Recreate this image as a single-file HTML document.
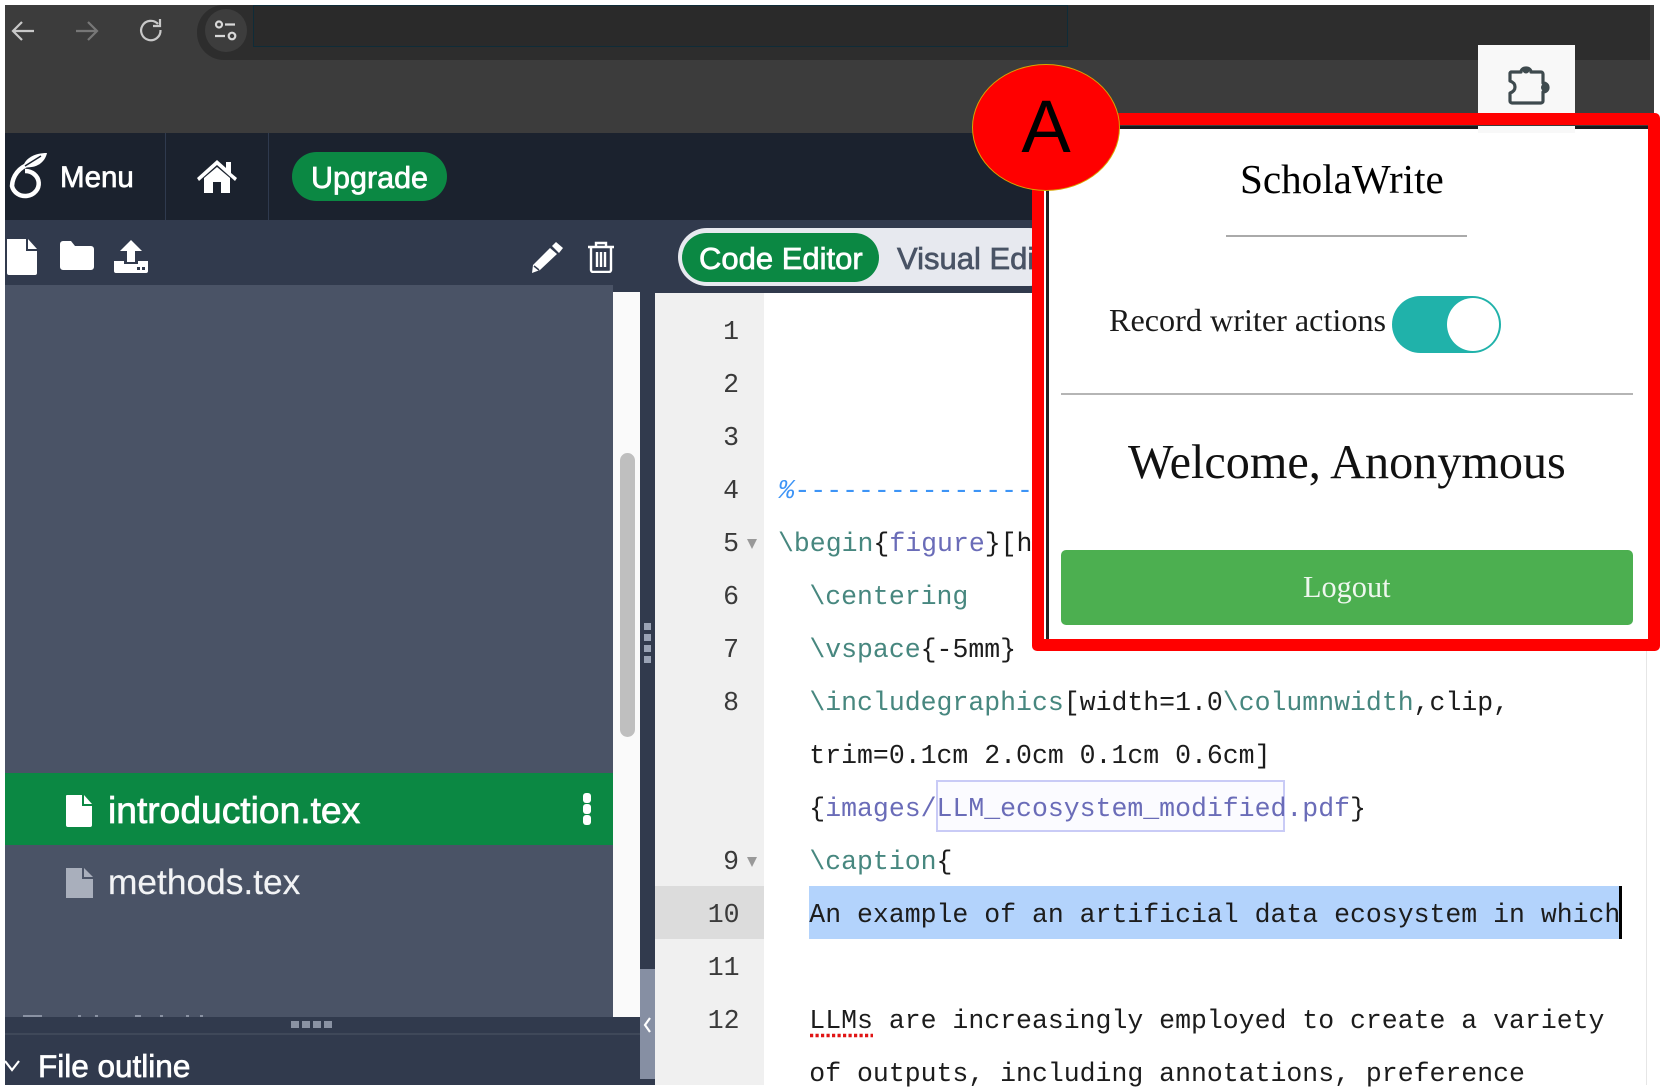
<!DOCTYPE html>
<html lang="en"><head><meta charset="utf-8"><title>ScholaWrite</title>
<style>
html,body{margin:0;padding:0;background:#fff;width:1661px;height:1091px;overflow:hidden}
#r{position:relative;width:1661px;height:1091px;overflow:hidden;font-family:"Liberation Sans",sans-serif;filter:blur(.35px)}
#r div,#r svg,#r span.a{position:absolute}
.t{white-space:pre;-webkit-text-stroke:.7px currentColor}
.ln{left:656.500px;width:83px;height:53px;line-height:53px;text-align:right;font:26.5px/53px "Liberation Mono",monospace;color:#3a3a3a}
.c{left:777.500px;height:53px;white-space:pre;font:26.5px/53px "Liberation Mono",monospace;color:#1c1c1c}
.g{color:#47877f}.p{color:#6a6cb8}
.s{font-family:"Liberation Serif",serif;white-space:pre;color:#111}
.tri{width:0;height:0;border-left:5px solid transparent;border-right:5px solid transparent;border-top:10px solid #999;left:747px}
</style></head><body><div id="r">

<!-- browser chrome -->
<div style="left:5px;top:5px;width:1649px;height:128px;background:#3c3c3c"></div>
<div style="left:197px;top:5px;width:1453px;height:55px;background:#2d2d2d;border-radius:27px 0 0 27px"></div>
<div style="left:205px;top:9px;width:42px;height:43px;border-radius:50%;background:#3d3d3d"></div>
<div style="left:253px;top:5px;width:815px;height:42px;background:#2a2a2a;border:1px solid #0f2c38;box-sizing:border-box"></div>
<svg style="left:10px;top:15px" width="170" height="32" viewBox="0 0 170 32" fill="none" stroke-width="2.2">
<path d="M24 16H4M12 7l-9 9 9 9" stroke="#c8c8c8"/><path d="M66 16h20M78 7l9 9-9 9" stroke="#777"/>
<path d="M148 9a9.700 9.700 0 1 0 2.500 6" stroke="#c8c8c8"/><path d="M150 4v7h-7" stroke="#c8c8c8" fill="none"/></svg>
<svg style="left:214px;top:19px" width="24" height="24" viewBox="0 0 24 24" fill="none" stroke="#d8d8d8" stroke-width="2.2"><circle cx="5" cy="5.500" r="3"/><path d="M11 5.500h10M1 17h10"/><circle cx="18" cy="17" r="3.300"/></svg>

<!-- nav -->
<div style="left:5px;top:133px;width:1645px;height:87px;background:#1b222e"></div>
<div style="left:165px;top:133px;width:1px;height:87px;background:#2f3a4e"></div>
<div style="left:268px;top:133px;width:1px;height:87px;background:#2f3a4e"></div>
<svg style="left:8px;top:150px" width="42" height="50" viewBox="0 0 42 50"><path d="M22 14C11 17 4.500 26 4 36A13.500 12.500 0 1 0 17 21" fill="none" stroke="#fff" stroke-width="4.500"/><path d="M15 17C17 8 27 3 39 3 37 12 29 19 15 17z" fill="#fff"/><path d="M17 16 33 6" stroke="#1b222e" stroke-width="1.500"/></svg>
<div class="t" style="left:60px;top:158px;font-size:29.5px;line-height:40px;color:#fff">Menu</div>
<svg style="left:197px;top:159px" width="40" height="34" viewBox="0 0 40 34" fill="#fff"><path d="M7 19 20 8l13 11v15H24V23h-8v11H7z"/><path d="M0 19 20 1l9 8V3h5v11l6 5-2 3L20 6 2 22z"/></svg>
<div style="left:292px;top:152px;width:155px;height:49px;border-radius:25px;background:#0b8843"></div>
<div class="t" style="left:311px;top:158px;font-size:30.5px;line-height:40px;color:#fff">Upgrade</div>

<!-- toolbar -->
<div style="left:5px;top:220px;width:1045px;height:73px;background:#313a4d"></div>
<svg style="left:7px;top:239px" width="31" height="36" viewBox="0 0 31 36" fill="#fff"><path d="M0 0h19v12h11v22a2 2 0 0 1-2 2H2a2 2 0 0 1-2-2z"/><path d="M21 0l9 10h-9z"/></svg>
<svg style="left:60px;top:241px" width="34" height="29" viewBox="0 0 34 29" fill="#fff"><path d="M0 3a3 3 0 0 1 3-3h8l4 5h16a3 3 0 0 1 3 3v18a3 3 0 0 1-3 3H3a3 3 0 0 1-3-3z"/></svg>
<svg style="left:114px;top:240px" width="34" height="33" viewBox="0 0 34 33" fill="#fff"><path d="M17 0l11 11h-7v11h-8V11H6z"/><path d="M0 21h10v3h14v-3h10v10a2 2 0 0 1-2 2H2a2 2 0 0 1-2-2z"/><rect x="23" y="27" width="3" height="3" fill="#313a4d"/><rect x="28" y="27" width="3" height="3" fill="#313a4d"/></svg>
<svg style="left:531px;top:242px" width="32" height="31" viewBox="0 0 32 31"><path d="M25 0l7 6-4 5-7-7zM19 6l7 6L9 28 1 31l1-8z" fill="#fff"/><path d="M3 24l5 4" stroke="#313a4d" stroke-width="1.500"/></svg>
<svg style="left:587px;top:241px" width="28" height="32" viewBox="0 0 28 32" fill="none" stroke="#fff" stroke-width="2.400"><path d="M1 6h26M9 6V2h10v4M4 6v23a2 2 0 0 0 2 2h16a2 2 0 0 0 2-2V6M10 11v15M14 11v15M18 11v15"/></svg>

<!-- code/visual toggle -->
<div style="left:678px;top:228px;width:380px;height:58px;border-radius:29px;background:#e7e9ef"></div>
<div style="left:682px;top:233px;width:197px;height:49px;border-radius:25px;background:#0b8843"></div>
<div class="t" style="left:699px;top:238.500px;font-size:31px;line-height:40px;color:#fff">Code Editor</div>
<div class="t" style="left:897px;top:238.500px;font-size:31px;line-height:40px;color:#495365">Visual Editor</div>

<!-- file tree -->
<div style="left:7px;top:285px;width:606px;height:732px;background:#4a5366"></div>
<div style="left:5px;top:285px;width:2px;height:800px;background:#4a5366"></div>
<div style="left:613px;top:292px;width:27px;height:725px;background:#fafafa"></div>
<div style="left:620px;top:453px;width:15px;height:284px;border-radius:8px;background:#bfbfbf"></div>
<div style="left:5px;top:773px;width:608px;height:72px;background:#0b8843"></div>
<svg style="left:66px;top:795px" width="26" height="32" viewBox="0 0 26 32" fill="#fff"><path d="M0 1a1 1 0 0 1 1-1h15v11h10v19a2 2 0 0 1-2 2H2a2 2 0 0 1-2-2z"/><path d="M18 0l8 9h-8z"/></svg>
<div class="t" style="left:108px;top:788px;font-size:37.2px;line-height:44px;color:#fff">introduction.tex</div>
<div style="left:583px;top:793px;width:8px;height:10px;border-radius:3px;background:#fff"></div>
<div style="left:583px;top:804px;width:8px;height:10px;border-radius:3px;background:#fff"></div>
<div style="left:583px;top:815px;width:8px;height:10px;border-radius:3px;background:#fff"></div>
<svg style="left:66px;top:868px" width="27" height="30" viewBox="0 0 27 30" fill="#a9afbc"><path d="M0 0h16v11h11v19H0z"/><path d="M18 0l9 9h-9z"/></svg>
<div class="t" style="left:108px;top:861px;font-size:35.300px;line-height:44px;color:#f2f3f5;-webkit-text-stroke:.2px #f2f3f5">methods.tex</div>
<div style="left:23px;top:1015px;width:19px;height:2px;background:#8a92a3"></div>
<div style="left:78px;top:1015px;width:3px;height:2px;background:#8a92a3"></div>
<div style="left:95px;top:1015px;width:3px;height:2px;background:#8a92a3"></div>
<div style="left:135px;top:1015px;width:6px;height:2px;background:#8a92a3"></div>
<div style="left:160px;top:1015px;width:3px;height:2px;background:#8a92a3"></div>
<div style="left:186px;top:1015px;width:3px;height:2px;background:#8a92a3"></div>
<div style="left:200px;top:1015px;width:3px;height:2px;background:#8a92a3"></div>

<!-- bottom panel -->
<div style="left:5px;top:1017px;width:635px;height:68px;background:#313a4d"></div>
<div style="left:5px;top:1033px;width:635px;height:2px;background:#3f4859"></div>
<div style="left:291px;top:1021px;width:8px;height:7px;background:#8a92a3"></div>
<div style="left:302px;top:1021px;width:8px;height:7px;background:#8a92a3"></div>
<div style="left:313px;top:1021px;width:8px;height:7px;background:#8a92a3"></div>
<div style="left:324px;top:1021px;width:8px;height:7px;background:#8a92a3"></div>
<svg style="left:3px;top:1059px" width="18" height="14" viewBox="0 0 18 14" fill="none" stroke="#fff" stroke-width="2.200"><path d="M2 2l7 9 7-9"/></svg>
<div class="t" style="left:38px;top:1045px;font-size:31.5px;line-height:42px;color:#fff">File outline</div>

<!-- rail -->
<div style="left:640px;top:285px;width:15px;height:800px;background:#313a4d"></div>
<div style="left:640px;top:969px;width:15px;height:110px;background:#868fa3"></div>
<svg style="left:642px;top:1016px" width="11" height="18" viewBox="0 0 11 18" fill="none" stroke="#fff" stroke-width="2.200"><path d="M8 2L3 9l5 7"/></svg>
<div style="left:644px;top:623px;width:7px;height:7px;background:#9aa3b5"></div>
<div style="left:644px;top:634px;width:7px;height:7px;background:#9aa3b5"></div>
<div style="left:644px;top:645px;width:7px;height:7px;background:#9aa3b5"></div>
<div style="left:644px;top:656px;width:7px;height:7px;background:#9aa3b5"></div>

<!-- editor -->
<div style="left:655px;top:293px;width:992px;height:792px;background:#fff"></div>
<div style="left:1646px;top:640px;width:1px;height:445px;background:#e6e6e6"></div>
<div style="left:655px;top:293px;width:109px;height:792px;background:#f0f0f0"></div>
<div style="left:655px;top:886px;width:109px;height:53px;background:#dcdcdc"></div>
<div style="left:809px;top:886px;width:813px;height:53px;background:#b3d3fc"></div>
<div style="left:936px;top:780px;width:349px;height:52px;box-sizing:border-box;border:2px solid #c9cbf6;background:#fbfbff"></div>

<div class="ln" style="top:306px;left:656px">1</div>
<div class="ln" style="top:359px;left:656px">2</div>
<div class="ln" style="top:412px;left:656px">3</div>
<div class="ln" style="top:465px;left:656px">4</div>
<div class="ln" style="top:518px;left:656px">5</div>
<div class="ln" style="top:571px;left:656px">6</div>
<div class="ln" style="top:624px;left:656px">7</div>
<div class="ln" style="top:677px;left:656px">8</div>
<div class="ln" style="top:836px;left:656px">9</div>
<div class="ln" style="top:889px">10</div>
<div class="ln" style="top:942px">11</div>
<div class="ln" style="top:995px">12</div>
<div class="tri" style="top:539px"></div>
<div class="tri" style="top:857px"></div>

<div class="c" style="top:465px;color:#3d94f6;left:778.500px"><i>%</i>---------------------</div>
<div class="c" style="top:518px;left:778px"><span class="g">\begin</span>{<span class="p">figure</span>}[h]</div>
<div class="c" style="top:571px">  <span class="g">\centering</span></div>
<div class="c" style="top:624px">  <span class="g">\vspace</span>{-5mm}</div>
<div class="c" style="top:677px">  <span class="g">\includegraphics</span>[width=1.0<span class="g">\columnwidth</span>,clip,</div>
<div class="c" style="top:730px">  trim=0.1cm 2.0cm 0.1cm 0.6cm]</div>
<div class="c" style="top:783px">  {<span class="p">images/LLM_ecosystem_modified.pdf</span>}</div>
<div class="c" style="top:836px">  <span class="g">\caption</span>{</div>
<div class="c" style="top:889px">  An example of an artificial data ecosystem in which</div>
<div style="left:1619px;top:886px;width:3px;height:53px;background:#000"></div>
<div class="c" style="top:995px">  LLMs are increasingly employed to create a variety</div>
<div class="c" style="top:1048px;height:41px;overflow:hidden">  of outputs, including annotations, preference</div>
<svg style="left:809px;top:1033px" width="64" height="5" viewBox="0 0 64 5"><path d="M1 2.500H64" stroke="#e01515" stroke-width="3.500" stroke-dasharray="3.200 2.300"/></svg>

<!-- extension button + popup -->
<div style="left:1040px;top:126px;width:610px;height:520px;background:#fff"></div>
<div style="left:1040px;top:126px;width:610px;height:3px;background:#16181c"></div>
<div style="left:1046px;top:126px;width:3px;height:520px;background:#222"></div>
<div style="left:1478px;top:45px;width:97px;height:69px;background:#f8f8f8"></div>
<div style="left:1478px;top:126px;width:97px;height:7px;background:#f8f8f8"></div>
<svg style="left:1506px;top:63px" width="44" height="44" viewBox="0 0 44 44" fill="none"><path d="M5 9h10c0-2 2-4 5-4s5 2 5 4h10a2 2 0 0 1 2 2v9c3 0 5 2 5 4.500S40 29 37 29v9a2 2 0 0 1-2 2H6a2 2 0 0 1-2-2v-8c3-1 5-3 5-6s-2-5-5-6v-8a2 2 0 0 1 1-1z" stroke="#3e4a4e" stroke-width="3.200" stroke-linejoin="round"/><circle cx="20" cy="7" r="3.500" fill="#3e4a4e"/><circle cx="39" cy="24.500" r="4" fill="#3e4a4e"/></svg>

<div class="s" style="left:1240px;top:153px;font-size:41.100px;line-height:52px;color:#000">ScholaWrite</div>
<div style="left:1226px;top:235px;width:241px;height:2px;background:#aaa"></div>
<div class="s" style="left:1109px;top:300px;font-size:32.2px;line-height:40px;color:#1a1a1a">Record writer actions</div>
<div style="left:1392px;top:296px;width:109px;height:57px;border-radius:29px;background:#20b2aa"></div>
<div style="left:1447px;top:298px;width:52px;height:53px;border-radius:50%;background:#fff"></div>
<div style="left:1061px;top:393px;width:572px;height:2px;background:#b5b5b5"></div>
<div class="s" style="left:1128px;top:433px;font-size:48.200px;line-height:60px;color:#111">Welcome, Anonymous</div>
<div style="left:1061px;top:550px;width:572px;height:75px;border-radius:5px;background:#4caf50"></div>
<div class="s" style="left:1303px;top:567px;font-size:30.300px;line-height:40px;color:#eef7ee">Logout</div>

<!-- annotation -->
<div style="left:1032px;top:113px;width:628px;height:538px;box-sizing:border-box;border:12.500px solid #f00;border-radius:5px"></div>
<div style="left:972px;top:64px;width:148px;height:127px;box-sizing:border-box;border-radius:50%;background:#f00;border:1px solid #d9a400"></div>
<div style="left:972px;top:83px;width:148px;text-align:center;font-size:74px;line-height:88px;color:#000">A</div>
</div></body></html>
